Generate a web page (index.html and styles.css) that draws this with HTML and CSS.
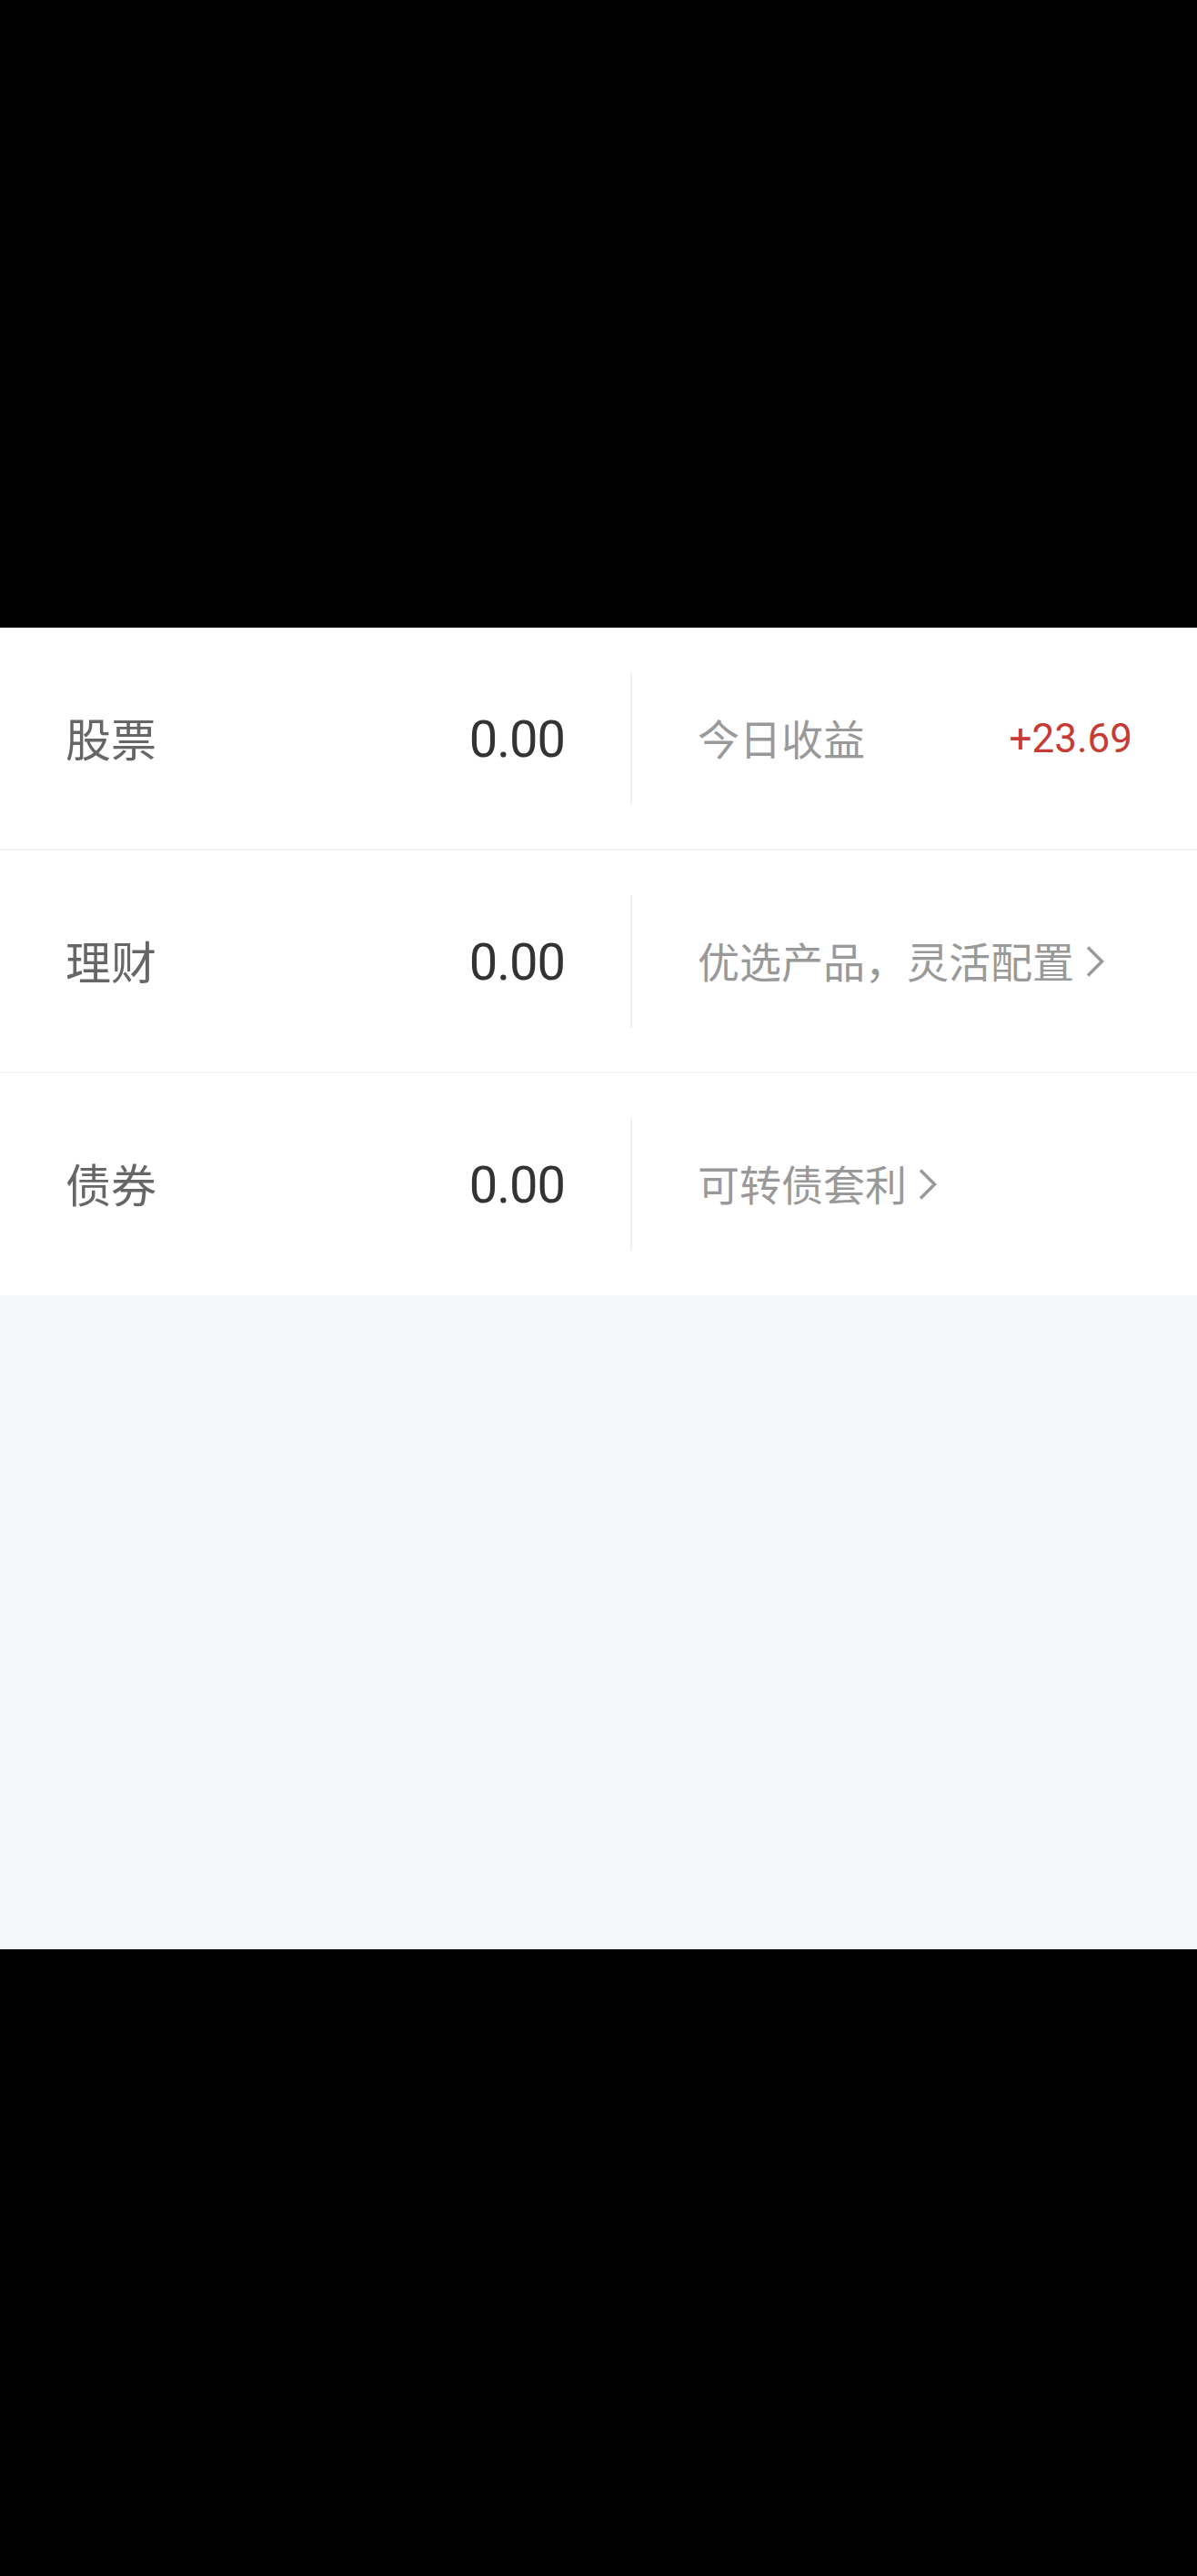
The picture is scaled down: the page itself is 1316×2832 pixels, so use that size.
FILE: index.html
```html
<!DOCTYPE html>
<html lang="zh-CN">
<head>
    <meta charset="UTF-8">
    <meta name="viewport" content="width=device-width, initial-scale=1.0">
    <title>资产</title>
    <link rel="stylesheet" href="styles.css">
</head>
<body>
    <div class="screen-top"></div>

    <!-- Asset list -->
    <div class="assets">
        <div class="asset-row">
            <div class="asset-main">
                <span class="asset-name">股票</span>
                <span class="asset-value">0.00</span>
            </div>
            <div class="asset-side">
                <span class="side-text">今日收益</span>
                <span class="side-profit">+23.69</span>
            </div>
        </div>
        <div class="asset-row">
            <div class="asset-main">
                <span class="asset-name">理财</span>
                <span class="asset-value">0.00</span>
            </div>
            <div class="asset-side">
                <a class="side-link" href="#">优选产品，灵活配置
                    <svg class="chevron" viewBox="0 0 20 34"><path d="M2 1.5 L17.5 17 L2 32.5" /></svg>
                </a>
            </div>
        </div>
        <div class="asset-row">
            <div class="asset-main">
                <span class="asset-name">债券</span>
                <span class="asset-value">0.00</span>
            </div>
            <div class="asset-side">
                <a class="side-link" href="#">可转债套利
                    <svg class="chevron" viewBox="0 0 20 34"><path d="M2 1.5 L17.5 17 L2 32.5" /></svg>
                </a>
            </div>
        </div>
    </div>

    <div class="blank-area"></div>
    <div class="screen-bottom"></div>
</body>
</html>
```

FILE: styles.css
```css
body {
    margin: 0;
    padding: 0;
    background-color: #000;
    font-family: "Noto Sans CJK SC", "Noto Sans", sans-serif;
}
.screen-top {
    height: 690px;
    background-color: #000;
}
.assets {
    background-color: #fff;
}
.asset-row {
    display: flex;
    align-items: center;
    height: 243px;
    border-bottom: 2px solid #f3f3f3;
}
.asset-row:last-child {
    border-bottom: none;
    height: 244px;
}
.asset-main {
    width: 695px;
    box-sizing: border-box;
    padding: 0 72px;
    display: flex;
    align-items: center;
    justify-content: space-between;
    border-right: 2px solid #f0f0f0;
    height: 146px;
}
.asset-name {
    font-size: 50px;
    line-height: 1;
    color: #666;
    margin-top: -4px;
}
.asset-value {
    font-family: Roboto, "Noto Sans", sans-serif;
    font-size: 56px;
    line-height: 1;
    color: #333;
    letter-spacing: -1px;
    margin-top: 2px;
}
.asset-side {
    flex: 1;
    display: flex;
    align-items: center;
    justify-content: space-between;
    padding: 0 71px 0 72px;
}
.side-text {
    font-size: 46px;
    line-height: 1;
    color: #999;
    margin-top: -4px;
}
.side-profit {
    font-family: Roboto, "Noto Sans", sans-serif;
    font-size: 44px;
    color: #c63c35;
}
.side-link {
    display: flex;
    align-items: center;
    gap: 13px;
    font-size: 46px;
    line-height: 1;
    color: #999;
    text-decoration: none;
    margin-top: -4px;
}
.chevron {
    width: 20px;
    height: 34px;
    margin-top: 4px;
    fill: none;
    stroke: #999;
    stroke-width: 3.5;
}
.blank-area {
    height: 719px;
    background-color: #f5f6f8;
}
.screen-bottom {
    height: 690px;
    background-color: #000;
}
```
